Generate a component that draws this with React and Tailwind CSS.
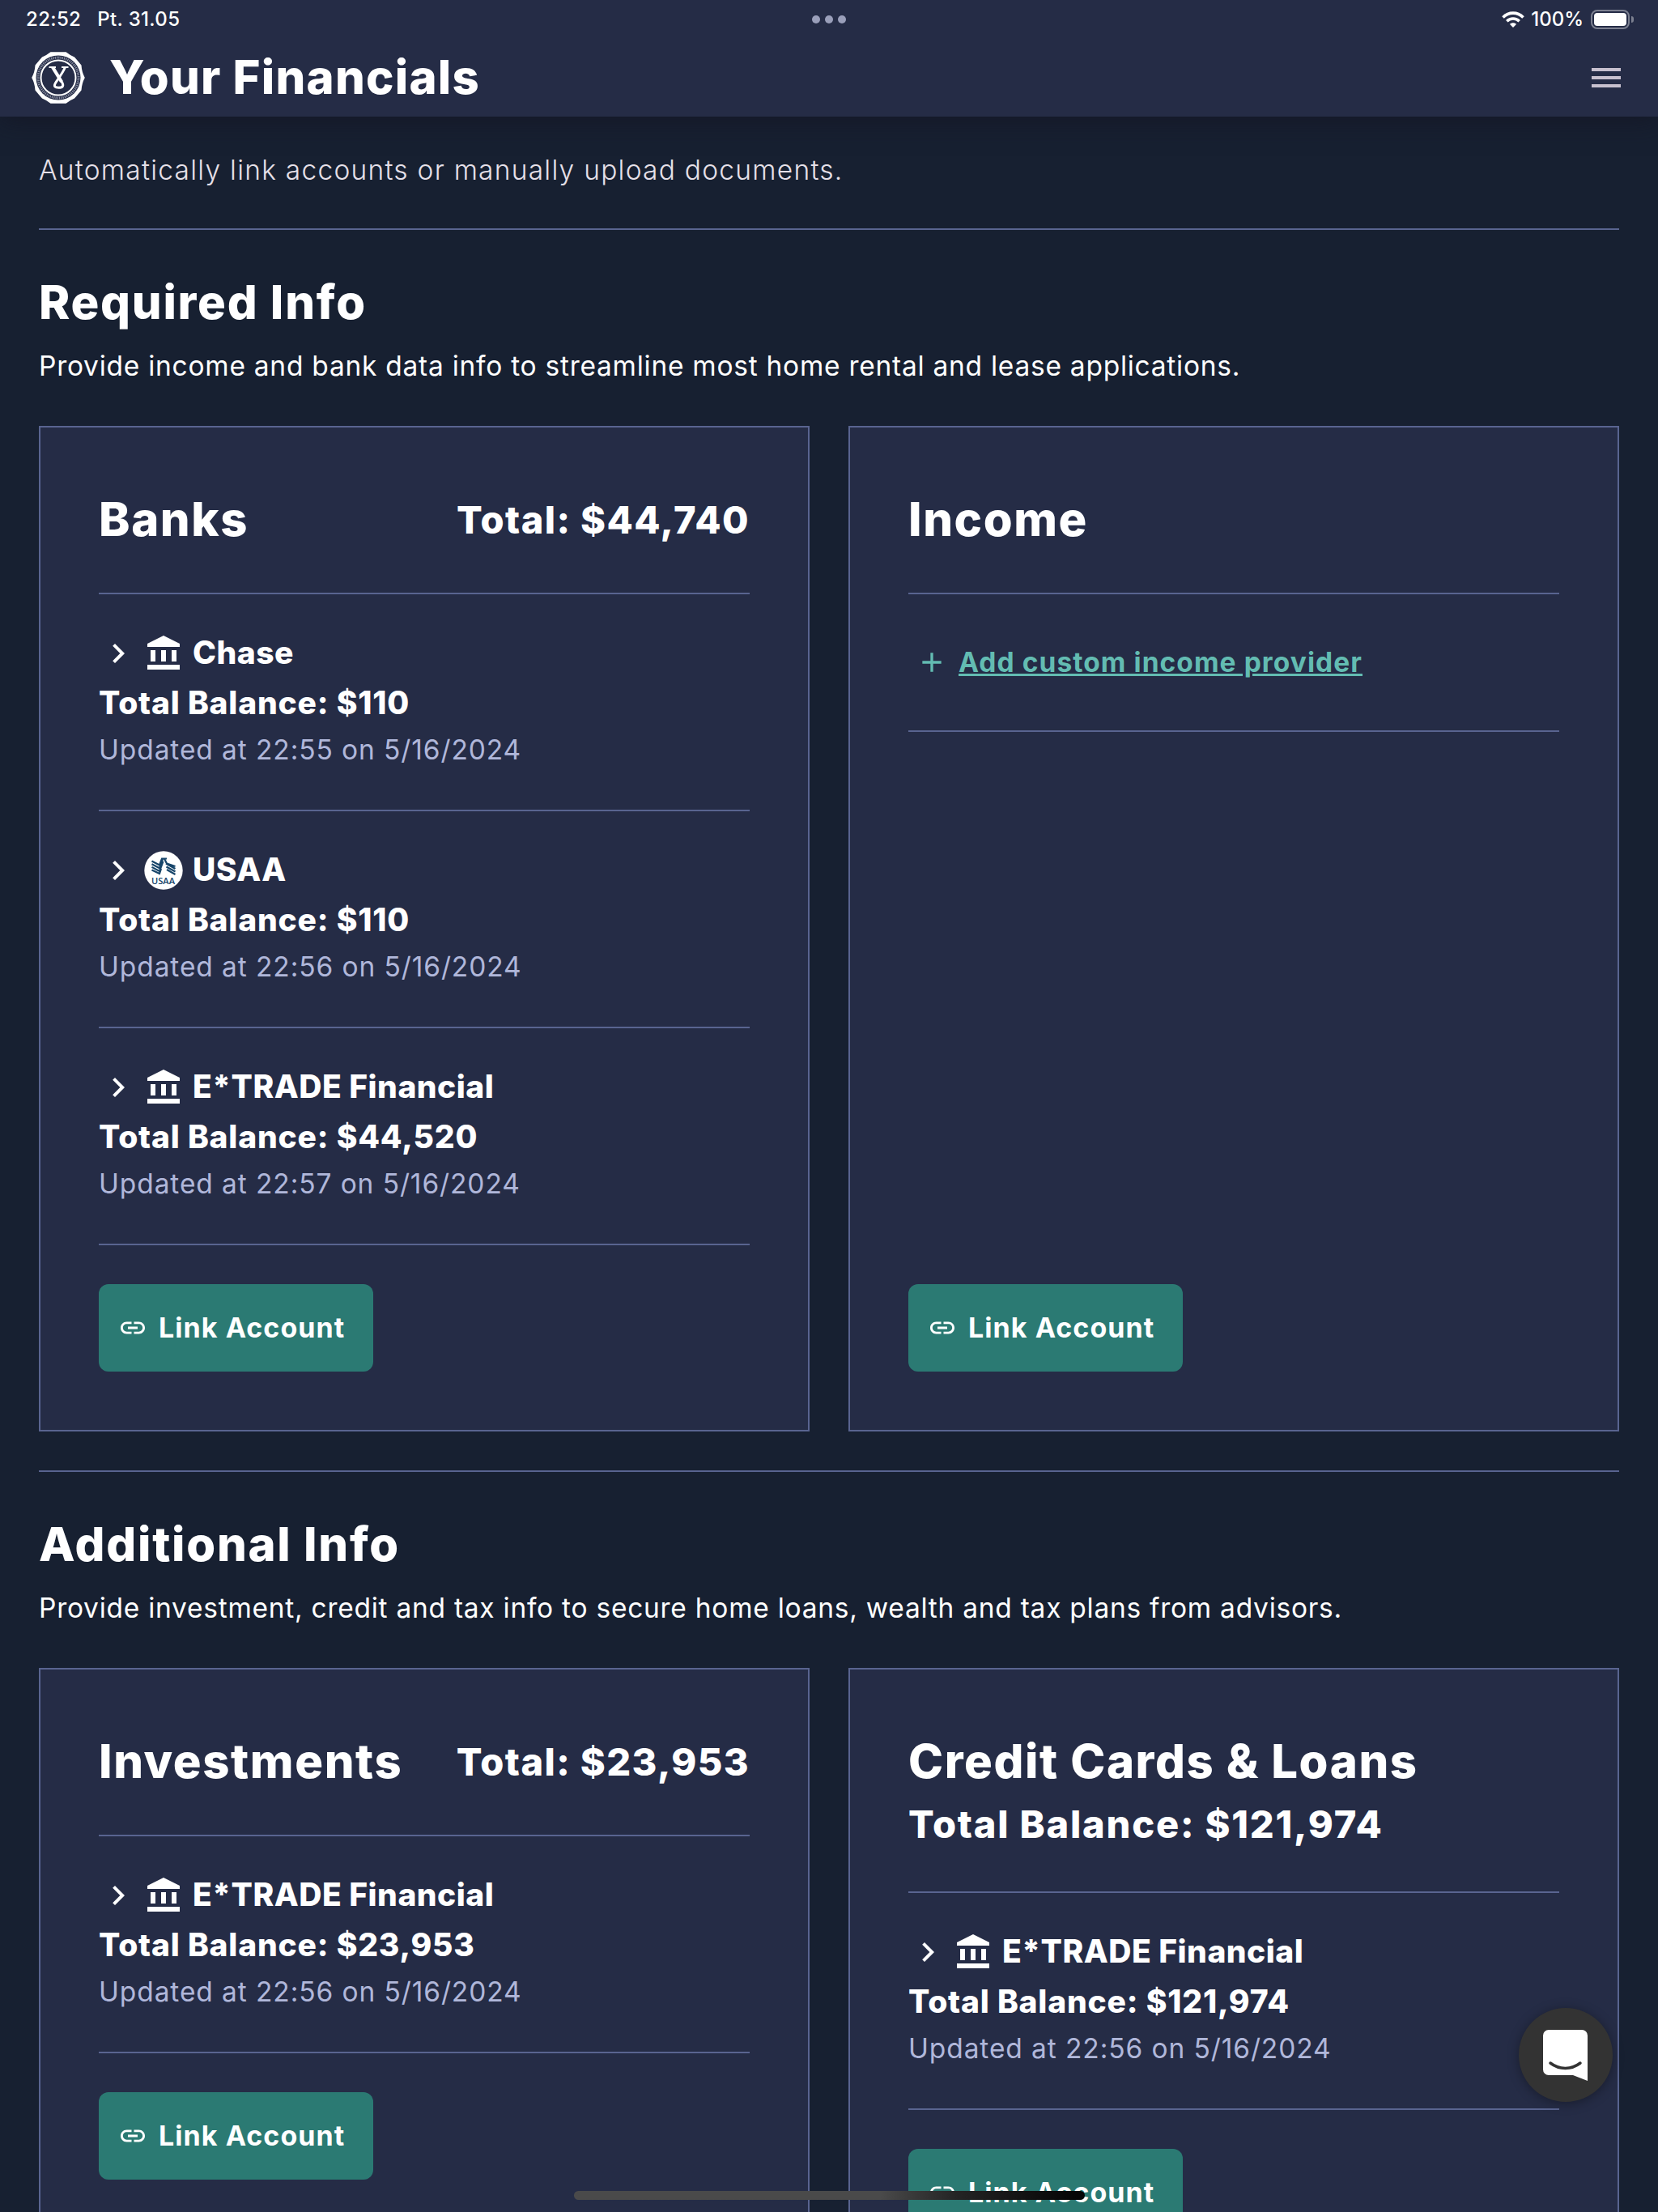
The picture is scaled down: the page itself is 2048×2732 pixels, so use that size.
import React from 'react'
import { MdAccountBalance, MdAdd, MdChevronRight, MdLink } from 'react-icons/md'

const bankAccounts = [
    { name: 'Chase', balance: '$110', updated: '22:55 on 5/16/2024' },
    { name: 'USAA', balance: '$110', updated: '22:56 on 5/16/2024', logo: 'usaa' },
    { name: 'E*TRADE Financial', balance: '$44,520', updated: '22:57 on 5/16/2024' },
]

const investmentAccounts = [
    { name: 'E*TRADE Financial', balance: '$23,953', updated: '22:56 on 5/16/2024' },
]

const creditAccounts = [
    { name: 'E*TRADE Financial', balance: '$121,974', updated: '22:56 on 5/16/2024' },
]

const SealLogo = () => {
    return (
        <svg className="h-16 w-[66px] shrink-0" viewBox="0 0 66 64" fill="none">
            <path fill="#fff" d="M23.500 0.300Q33 0.300 42.500 0.300Q47 4 53 6.500Q57 11 61.500 16.500Q62 25 65.800 32Q62 39 61.500 47.500Q57 53 53 57.500Q47 60 42.500 63.700Q33 63.700 23.500 63.700Q19 60 13 57.500Q9 53 4.500 47.500Q4 39 0.200 32Q4 25 4.500 16.500Q9 11 13 6.500Q19 4 23.500 0.300Z" />
            <circle cx="33" cy="32" r="27.500" fill="#252c46" />
            <circle cx="33" cy="32" r="25" stroke="#8b90a3" strokeWidth="3" strokeDasharray="1.200 1.100" />
            <circle cx="33" cy="32" r="21.500" stroke="#fff" strokeWidth="2" />
            <path stroke="#fff" strokeWidth="2" d="M21.500 19h8.500M37 19h8.500" />
            <path stroke="#fff" strokeWidth="4.200" d="M26 19L37 37" />
            <path stroke="#fff" strokeWidth="3" d="M41.500 19C38 27 33 33 29.500 38.500C27 43 29 44 33.500 44.300C38.500 44.300 40.500 42 37 36.500" />
        </svg>
    )
}

const UsaaLogo = () => {
    return (
        <svg className="h-12 w-12 shrink-0" viewBox="0 0 48 48">
            <circle cx="24" cy="24" r="23.700" fill="#fff" />
            <g stroke="#17456a" strokeWidth="2.200" fill="none">
                <path d="M9.500 12.500l9.500 5 3-8h6" />
                <path d="M9.500 16.200l9.500 5 4-11" />
                <path d="M9.500 19.900l9.500 5 4.500-12" />
                <path d="M9.500 23.500l9.500 4.500 2-6" />
                <path d="M25 9.500l3 6 10.500 3.500M27 15.500l11.500 6.500M27.500 19.500l11 6M28 23l10.500 6" />
            </g>
            <text x="9" y="40.500" fontSize="11.500" fontWeight="600" fill="#17456a" fontFamily="Open Sans, sans-serif" textLength="29" lengthAdjust="spacingAndGlyphs">USAA</text>
        </svg>
    )
}

const StatusBar = () => {
    return (
        <div className="relative flex h-12 items-center justify-between pr-[30px] pl-[32px] text-[24px] font-medium text-white">
            <div className="flex gap-[20px] tracking-[0.35px]">
                <span>22:52</span>
                <span>Pt. 31.05</span>
            </div>
            <div className="absolute top-[19px] left-[1003px] flex gap-1.5">
                <span className="h-2.5 w-2.5 rounded-full bg-[#9a9fba]" />
                <span className="h-2.5 w-2.5 rounded-full bg-[#9a9fba]" />
                <span className="h-2.5 w-2.5 rounded-full bg-[#9a9fba]" />
            </div>
            <div className="flex items-center">
                <svg className="h-5 w-7" viewBox="0 0 28 20">
                    <path fill="none" stroke="#fff" strokeWidth="3.600" d="M1.500 7.500C8.500 0.300 19.500 0.300 26.500 7.500M6.300 12.200C10.600 8 17.400 8 21.700 12.200" />
                    <path fill="#fff" d="M14 20l-4.200-4.200C12.200 13.600 15.800 13.600 18.200 15.800z" />
                </svg>
                <span className="ml-2">100%</span>
                <div className="ml-[9px] flex h-6 w-12 rounded-[8px] border-2 border-[#7c8090] p-0.5">
                    <div className="flex-1 rounded-[4px] bg-white" />
                </div>
                <div className="ml-0.5 h-2 w-[3px] rounded-r-full bg-[#7c8090]" />
            </div>
        </div>
    )
}

const Header = () => {
    return (
        <header className="relative h-36 bg-[#252c46] shadow-[0_4px_30px_rgba(20,20,35,0.75)]">
            <StatusBar />
            <div className="flex h-24 items-center pr-[46px] pl-[39px]">
                <SealLogo />
                <h1 className="mb-0.5 ml-[30px] text-[58px] leading-none font-extrabold tracking-[1.25px] text-white">Your Financials</h1>
                <div className="ml-auto flex w-9 flex-col gap-1.5">
                    <span className="h-1 bg-[#c8c1cf]" />
                    <span className="h-1 bg-[#c8c1cf]" />
                    <span className="h-1 bg-[#c8c1cf]" />
                </div>
            </div>
        </header>
    )
}

const Divider = () => <div className="h-0.5 w-full shrink-0 bg-[#596490]" />

const LinkButton = () => {
    return (
        <button className="flex h-[108px] w-[339px] shrink-0 items-center rounded-xl bg-[#2b7a73] pl-6 text-white">
            <MdLink className="h-9 w-9" />
            <span className="mb-px ml-3.5 text-[34px] leading-[50px] font-bold tracking-[1.05px] whitespace-nowrap">Link Account</span>
        </button>
    )
}

const Account = ({ account }) => {
    return (
        <>
            <div className="flex h-[266px] shrink-0 flex-col pt-[49px]">
                <div className="flex h-12 items-center text-white">
                    <MdChevronRight className="h-12 w-12" />
                    <span className="ml-2">
                        {account.logo === 'usaa' ? <UsaaLogo /> : <MdAccountBalance className="h-12 w-12" />}
                    </span>
                    <span className="mb-0.5 ml-3 text-[39px] leading-[46px] font-extrabold tracking-[0.5px]">{account.name}</span>
                </div>
                <p className="mt-[11px] h-[54px] text-[39px] leading-[52px] font-extrabold tracking-[0.8px] text-white">Total Balance: {account.balance}</p>
                <p className="h-[60px] text-[33.5px] leading-[60px] tracking-[0.9px] text-[#b0b7da]">Updated at {account.updated}</p>
            </div>
            <Divider />
        </>
    )
}

const Card = ({ title, total, balance, pinButton = true, children }) => {
    return (
        <div className="flex flex-1 flex-col border-2 border-[#596490] bg-[#252c46] p-[72px]">
            <div className="flex h-[84px] shrink-0 items-start justify-between text-white">
                <h3 className="text-[58px] leading-[82px] font-extrabold tracking-[1.6px]">{title}</h3>
                {total && <p className="text-[47px] leading-[84px] font-extrabold tracking-[1.4px]">Total: {total}</p>}
            </div>
            {balance && <p className="h-[70px] shrink-0 text-[47px] leading-[70px] font-extrabold tracking-[1.8px] text-white">Total Balance: {balance}</p>}
            <div className="mt-12 flex flex-1 flex-col">
                <Divider />
                {children}
                <div className={pinButton ? 'mt-auto pt-12' : 'pt-12'}>
                    <LinkButton />
                </div>
            </div>
        </div>
    )
}

const Section = ({ title, description, children }) => {
    return (
        <section>
            <Divider />
            <div className="h-[242px] pt-[54px] text-white">
                <h2 className="text-[58px] leading-[70px] font-extrabold tracking-[1.75px]">{title}</h2>
                <p className="mt-[18px] text-[33.5px] leading-[52px] tracking-[0.74px]">{description}</p>
            </div>
            <div className="flex gap-12">{children}</div>
        </section>
    )
}

export default function App() {
    return (
        <div className="relative h-[2732px] w-[2048px] overflow-hidden bg-[#172031] font-['Inter',sans-serif]">
            <Header />
            <main className="flex flex-col gap-12 px-12">
                <p className="-mb-12 h-[138px] pt-10 text-[33.5px] leading-[52px] font-[350] tracking-[1.25px] text-[#e6e0e9]">
                    Automatically link accounts or manually upload documents.
                </p>
                <Section title="Required Info" description="Provide income and bank data info to streamline most home rental and lease applications.">
                    <Card title="Banks" total="$44,740">
                        {bankAccounts.map((account) => <Account key={account.name} account={account} />)}
                    </Card>
                    <Card title="Income">
                        <div className="flex h-[168px] items-center pl-[9px] text-[#63bcb2]">
                            <MdAdd className="h-10 w-10" />
                            <span className="ml-[13px] text-[33.5px] font-bold tracking-[1.07px] underline">Add custom income provider</span>
                        </div>
                        <Divider />
                    </Card>
                </Section>
                <Section title="Additional Info" description="Provide investment, credit and tax info to secure home loans, wealth and tax plans from advisors.">
                    <Card title="Investments" total="$23,953" pinButton={false}>
                        {investmentAccounts.map((account) => <Account key={account.name} account={account} />)}
                    </Card>
                    <Card title="Credit Cards & Loans" balance="$121,974">
                        {creditAccounts.map((account) => <Account key={account.name} account={account} />)}
                    </Card>
                </Section>
            </main>

            {/* chat launcher */}
            <div className="absolute top-[2480px] left-[1876px] flex h-[116px] w-[116px] items-center justify-center rounded-full bg-[#333333] shadow-[0_2px_14px_rgba(0,0,0,0.35)]">
                <svg className="mr-px h-[63px] w-[55px]" viewBox="0 0 55 63">
                    <path fill="#fff" d="M7 0h41a7 7 0 0 1 7 7v56l-18-7H7a7 7 0 0 1-7-7V7a7 7 0 0 1 7-7z" />
                    <path fill="none" stroke="#333" strokeWidth="3.500" strokeLinecap="round" d="M9 41c11 8.500 26 8.500 37 0" />
                </svg>
            </div>

            {/* home indicator */}
            <div className="absolute top-[2706px] left-[709px] h-[11px] w-[631px] rounded-full bg-linear-to-r from-[#4a4a4a] from-60% via-[#242424] via-75% to-[#050505]" />
        </div>
    )
}
